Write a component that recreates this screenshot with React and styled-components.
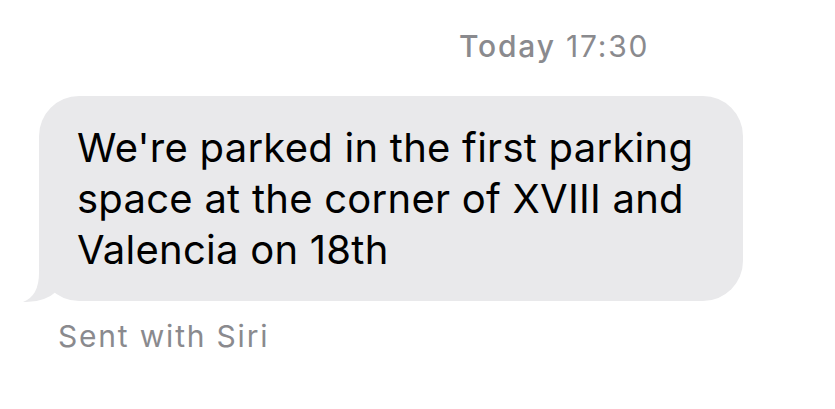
import React from "react";
import styled, { createGlobalStyle } from "styled-components";

const Global = createGlobalStyle`
  html, body { margin: 0; padding: 0; background: #ffffff; }
  body { font-family: Inter, "Noto Sans", Arial, sans-serif; -webkit-font-smoothing: antialiased; }
`;

const Thread = styled.div`
  width: 835px;
  height: 409px;
  display: flex;
  flex-direction: column;
  box-sizing: border-box;
  padding-top: 29px;
`;

const Stamp = styled.div`
  align-self: flex-start;
  margin-left: 459px;
  font-size: 30px;
  line-height: 34px;
  color: #8a8a8e;
  letter-spacing: 1.8px;
  white-space: nowrap;
`;

const StampDay = styled.span`
  font-weight: 500;
`;

const StampTime = styled.span`
  font-weight: 400;
`;

const BubbleWrap = styled.div`
  position: relative;
  margin-top: 33px;
  margin-left: 39px;
  width: 704px;
`;

const Bubble = styled.div`
  position: relative;
  z-index: 1;
  box-sizing: border-box;
  height: 205px;
  background: #e9e9eb;
  border-radius: 40px;
  padding: 26px 10px 0 38px;
  font-size: 40px;
  line-height: 51px;
  color: #000000;
  letter-spacing: 0.25px;
  white-space: nowrap;
`;

const Tail = styled.svg`
  position: absolute;
  z-index: 0;
  left: -17px;
  bottom: -2px;
  width: 60px;
  height: 47px;
`;

const Caption = styled.div`
  margin-top: 18px;
  margin-left: 58px;
  font-size: 30px;
  line-height: 34px;
  color: #8a8a8e;
  letter-spacing: 1.8px;
`;

export default function App() {
  return (
    <>
      <Global />
      <Thread>
        <Stamp>
          <StampDay>Today</StampDay> <StampTime>17:30</StampTime>
        </Stamp>
        <BubbleWrap>
          <Tail viewBox="0 0 60 47" aria-hidden="true">
            <path
              d="M17 0 L17 17 Q17 40 1 46 Q22 47 35 35 L60 10 L60 0 Z"
              fill="#e9e9eb"
            />
          </Tail>
          <Bubble>
            We're parked in the first parking
            <br />
            space at the corner of XVIII and
            <br />
            Valencia on 18th
          </Bubble>
        </BubbleWrap>
        <Caption>Sent with Siri</Caption>
      </Thread>
    </>
  );
}
